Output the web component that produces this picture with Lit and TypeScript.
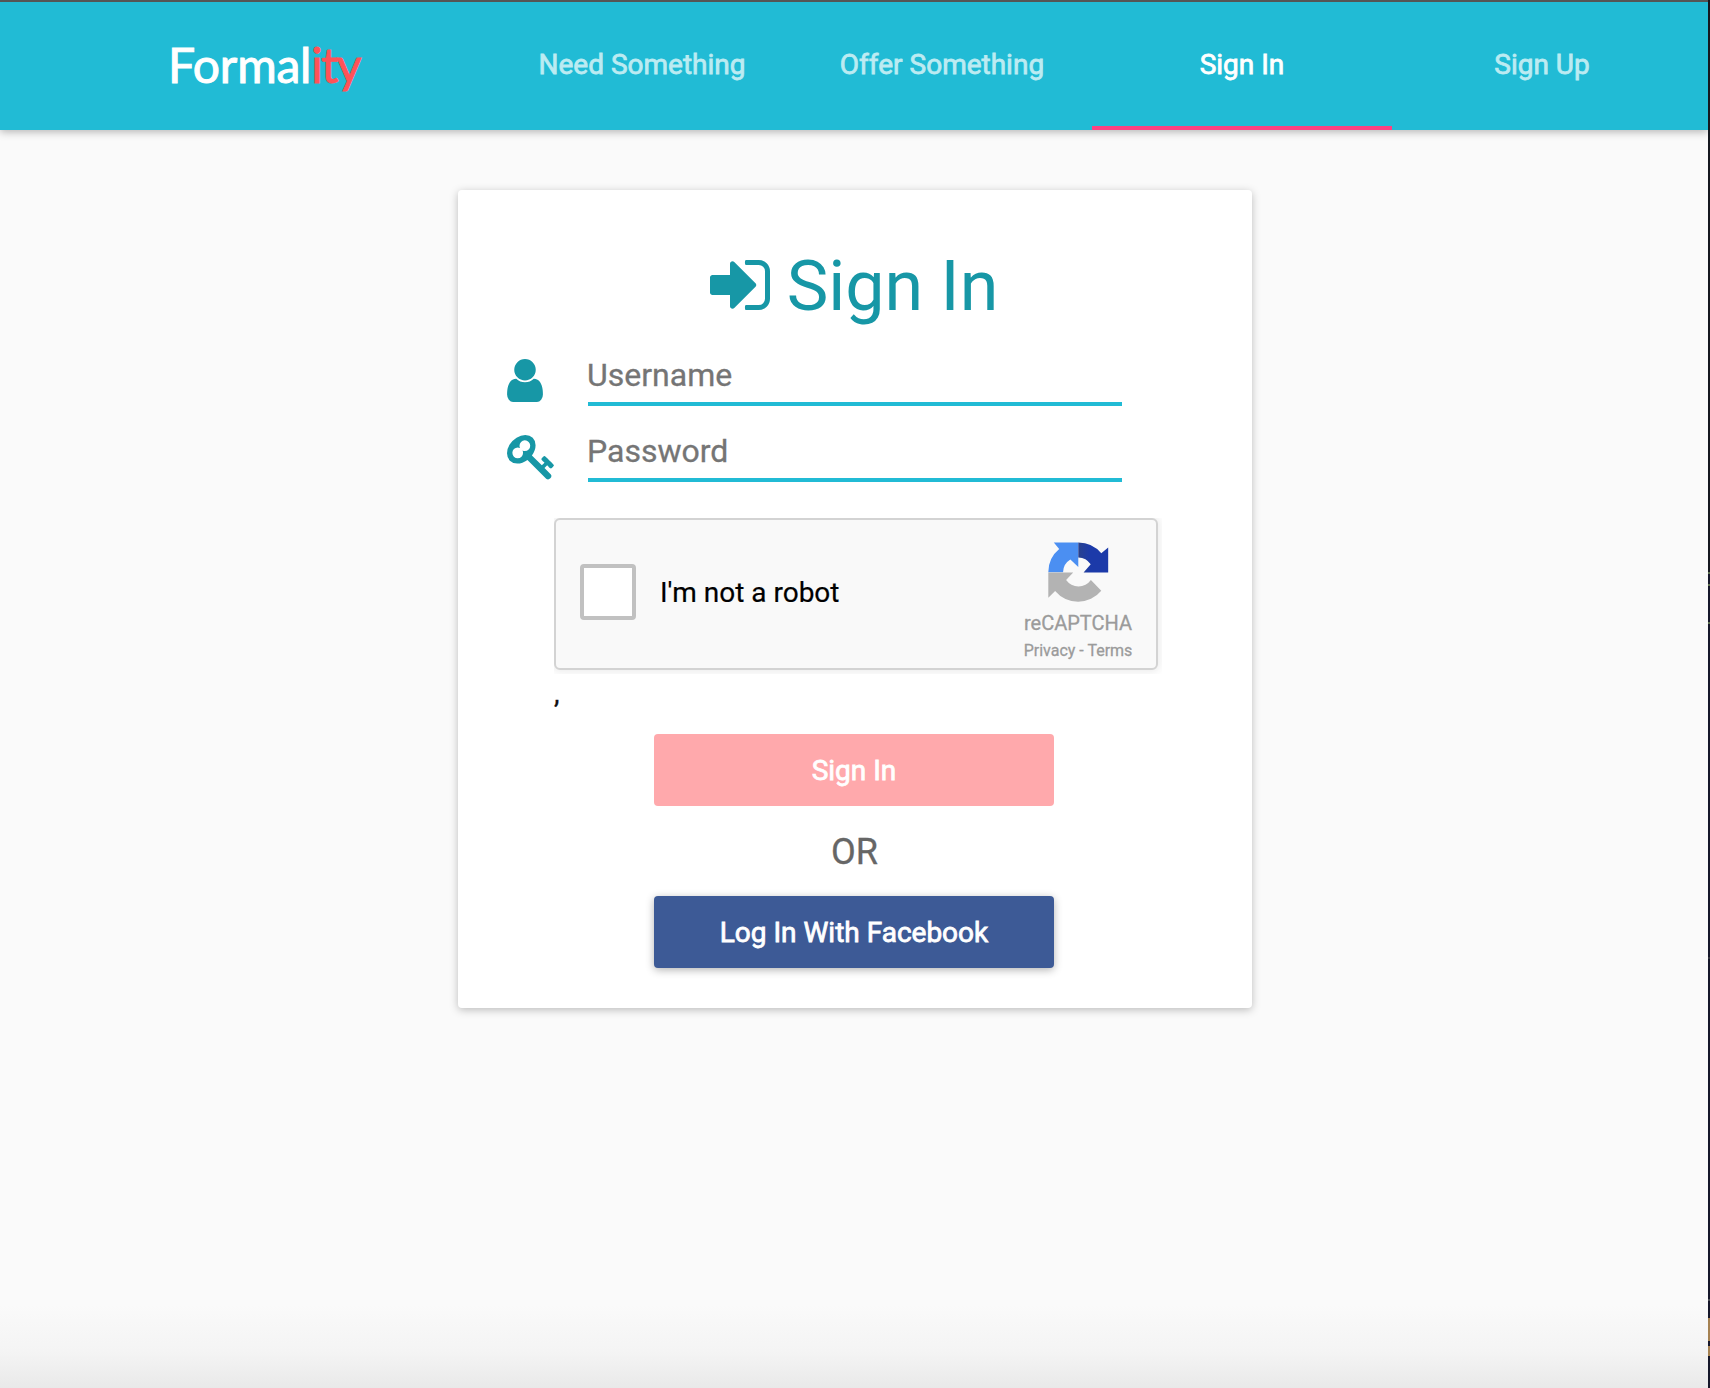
import { LitElement, html, css, svg } from "lit";
import { customElement, property } from "lit/decorators.js";

const ICONS: Record<string, { box: string; w: number; h: number; d: string }> = {
  signin: {
    box: "128 256 1536 1280", w: 60, h: 50,
    d: "M1312 896q0 26-19 45l-544 544q-19 19-45 19t-45-19-19-45v-288h-448q-26 0-45-19t-19-45v-384q0-26 19-45t45-19h448v-288q0-26 19-45t45-19 45 19l544 544q19 19 19 45zm352-352v704q0 119-84.5 203.5t-203.5 84.5h-320q-13 0-22.5-9.5t-9.5-22.5q0-4-1-20t-.5-26.5 3-23.5 10-19.5 20.5-6.5h320q66 0 113-47t47-113v-704q0-66-47-113t-113-47h-312l-11.5-1-11.5-3-8-5.5-7-9-2-13.5q0-4-1-20t-.5-26.5 3-23.5 10-19.5 20.5-6.5h320q119 0 203.5 84.5t84.5 203.5z",
  },
  user: {
    box: "256 128 1280 1536", w: 36, h: 43,
    d: "M1536 1399q0 109-62.5 187t-150.5 78h-854q-88 0-150.5-78t-62.5-187q0-85 8.5-160.5t31.5-152 58.5-131 94-89 134.5-34.5q131 128 313 128t313-128q76 0 134.5 34.5t94 89 58.5 131 31.5 152 8.5 160.5zm-256-887q0 159-112.5 271.5t-271.5 112.5-271.5-112.5-112.5-271.5 112.5-271.5 271.5-112.5 271.5 112.5 112.5 271.5z",
  },
  key: {
    box: "0 128 1792 1792", w: 50, h: 50,
    d: "M832 512q0-80-56-136t-136-56-136 56-56 136q0 42 19 83-41-19-83-19-80 0-136 56t-56 136 56 136 136 56 136-56 56-136q0-42-19-83 41 19 83 19 80 0 136-56t56-136zm851 704q0 17-49 66t-66 49q-9 0-28.5-16t-36.5-33-38.5-40-24.5-26l-96 96 220 220q28 28 28 68 0 42-39 81t-81 39q-40 0-68-28l-671-671q-176 131-365 131-163 0-265.5-102.5t-102.5-265.5q0-160 95-313t248-248 313-95q163 0 265.5 102.5t102.5 265.5q0 189-131 365l355 355 96-96q-3-3-26-24.5t-40-38.5-33-36.5-16-28.5q0-17 49-66t66-49q13 0 23 10 6 6 46 44.5t82 79.5 86.5 86 73 78 28.5 41z",
  },
};

@customElement("form-icon")
export class FormIcon extends LitElement {
  @property() name = "user";
  static styles = css`
    :host { display: block; color: #1797a6; }
    svg { display: block; fill: currentColor; }
  `;
  render() {
    const i = ICONS[this.name];
    return html`<svg width=${i.w} height=${i.h} viewBox=${i.box}>${svg`<path d=${i.d} />`}</svg>`;
  }
}

@customElement("robot-check")
export class RobotCheck extends LitElement {
  static styles = css`
    :host { display: block; width: 608px; height: 156px; overflow: hidden; }
    .box {
      box-sizing: border-box; width: 604px; height: 152px; display: flex;
      border: 2px solid #d3d3d3; border-radius: 6px; background: #f9f9f9;
      box-shadow: 0 0 8px 2px rgba(0, 0, 0, 0.08);
    }
    .left { flex: 1; display: flex; align-items: center; padding: 0 0 4px 24px; gap: 24px; }
    .check {
      box-sizing: border-box; width: 56px; height: 56px;
      background: #fff; border: 4px solid #c1c1c1; border-radius: 4px;
    }
    .label { font-size: 28px; line-height: 34px; padding-top: 1px; color: #000; -webkit-text-stroke: 0.2px currentColor; }
    .brand {
      box-sizing: border-box; width: 156px; padding-top: 22px;
      display: flex; flex-direction: column; align-items: center;
      color: #9b9b9b; -webkit-text-stroke: 0.3px currentColor;
    }
    svg { display: block; }
    .name { font-size: 20px; line-height: 24px; margin-top: 8px; }
    .links { font-size: 16px; line-height: 20px; margin-top: 6px; }
  `;
  render() {
    return html`
      <div class="box">
        <div class="left">
          <div class="check"></div>
          <div class="label">I'm not a robot</div>
        </div>
        <div class="brand">
          <svg width="61" height="61" viewBox="0 0 60 60">
            <defs>
              <linearGradient id="dark" x1="0" x2="1">
                <stop offset="0" stop-color="#28418f" />
                <stop offset=".4" stop-color="#1c3aa9" />
              </linearGradient>
            </defs>
            <path fill="#4b8ff2" d="M5.7.4H29.8V24.5L22 17.3A15 15 0 0 0 14.8 29.8H.3A29.5 29.5 0 0 1 11 7Z" />
            <path fill="url(#dark)" d="M29.8.4A29.5 29.5 0 0 1 52.4 11L59.2 5.5V29.9H35L42 22A15 15 0 0 0 29.8 15.2Z" />
            <path fill="#b3b3b3" d="M.3 29.9H24.8L17.8 37.4A15 15 0 0 0 42.2 37.4L52.4 48A29.5 29.5 0 0 1 7 48.2L.3 54.8Z" />
          </svg>
          <div class="name">reCAPTCHA</div>
          <div class="links">Privacy - Terms</div>
        </div>
      </div>
    `;
  }
}

@customElement("app-root")
export class AppRoot extends LitElement {
  private tabs = ["Need Something", "Offer Something", "Sign In", "Sign Up"];
  private active = "Sign In";

  static styles = css`
    :host {
      display: grid; grid-template-columns: 1fr 2px; height: 1388px;
      font-family: Roboto, "Liberation Sans", sans-serif; overflow: hidden;
    }
    .page {
      display: flex; flex-direction: column; align-items: center;
      background: linear-gradient(to bottom, #fafafa 0 1305px, #f4f4f4 1352px, #e9e9e9 1388px);
    }
    .edge {
      background: linear-gradient(
        #15181f 0 572px, #5d7050 572px 574px, #15172a 574px 584px, #5d7050 584px 586px,
        #15172a 586px 622px, #5d7050 622px 624px, #15172a 624px 957px, #33363f 957px 959px,
        #15172a 959px 1299px, #4a4d55 1299px 1301px, #15172a 1301px 1318px,
        #a58252 1318px 1341px, #15172a 1341px 1346px, #a58252 1346px 1356px, #15172a 1356px
      );
    }
    header {
      box-sizing: border-box; width: 100%; height: 130px; flex: none;
      display: flex; justify-content: space-between;
      padding: 0 16px 0 168px;
      border-top: 2px solid #555; background: #21bbd5;
      box-shadow: 0 2px 8px rgba(0, 0, 0, 0.28);
    }
    .logo {
      display: flex; padding-top: 32px; color: #fff;
      font-family: Lato, Roboto, sans-serif; font-size: 48px; line-height: 62px;
      letter-spacing: -0.2px; -webkit-text-stroke: 1px currentColor;
    }
    .accent { color: #ff5257; letter-spacing: -1.6px; }
    nav { display: flex; }
    .tab {
      box-sizing: border-box; width: 300px; display: flex; align-items: center; justify-content: center;
      border-bottom: 4px solid transparent;
      font-size: 28px; color: #bcebf2; -webkit-text-stroke: 0.8px currentColor;
    }
    .tab.on { color: #fff; border-bottom-color: #ff4081; }
    .card {
      box-sizing: border-box; width: 794px; height: 818px; margin-top: 60px; flex: none;
      background: #fff; border-radius: 4px; display: flex; flex-direction: column;
      margin-left: 2px;
      box-shadow: 0 2px 8px rgba(0, 0, 0, 0.25);
    }
    .title {
      display: flex; justify-content: center; align-items: center; gap: 17px;
      height: 80px; margin-top: 56px; padding-right: 2px;
      font-size: 70px; line-height: 80px; font-weight: 400; color: #1797a6;
    }
    .title form-icon { padding-bottom: 2px; }
    .fields { display: flex; flex-direction: column; gap: 24px; margin: 28px 130px 0 49px; }
    .field { display: flex; height: 52px; }
    .sym { width: 81px; padding-top: 5px; box-sizing: border-box; }
    .entry {
      flex: 1; box-sizing: border-box; border-bottom: 4px solid #21bbd5; text-indent: -1px;
      font-size: 32px; line-height: 42px; color: #757575; -webkit-text-stroke: 0.3px currentColor;
    }
    robot-check { margin: 36px 0 0 96px; }
    .stray { margin: 4px 0 0 96px; font-size: 28px; line-height: 32px; color: #111; height: 32px; -webkit-text-stroke: 0.3px currentColor; }
    .btn {
      width: 400px; height: 72px; border-radius: 4px; margin-left: 196px;
      display: flex; align-items: center; justify-content: center;
      font-size: 28px; color: #fff; -webkit-text-stroke: 0.8px currentColor;
    }
    .btn.off { background: #ffa9ac; margin-top: 24px; }
    .btn.fb { background: #3d5a96; margin-top: 22px; box-shadow: 0 2px 8px rgba(0, 0, 0, 0.3); }
    .or { align-self: center; margin-top: 24px; font-size: 36px; line-height: 44px; color: #666; padding-right: 1px; -webkit-text-stroke: 0.3px currentColor; }
  `;

  render() {
    return html`
      <div class="page">
        <header>
          <div class="logo"><span>Formal</span><span class="accent">ity</span></div>
          <nav>
            ${this.tabs.map((t) => html`<div class="tab ${t === this.active ? "on" : ""}">${t}</div>`)}
          </nav>
        </header>
        <section class="card">
          <div class="title"><form-icon name="signin"></form-icon><span>Sign In</span></div>
          <div class="fields">
            <div class="field"><div class="sym"><form-icon name="user"></form-icon></div><div class="entry">Username</div></div>
            <div class="field"><div class="sym"><form-icon name="key"></form-icon></div><div class="entry">Password</div></div>
          </div>
          <robot-check></robot-check>
          <div class="stray">,</div>
          <div class="btn off">Sign In</div>
          <div class="or">OR</div>
          <div class="btn fb">Log In With Facebook</div>
        </section>
      </div>
      <div class="edge"></div>
    `;
  }
}
